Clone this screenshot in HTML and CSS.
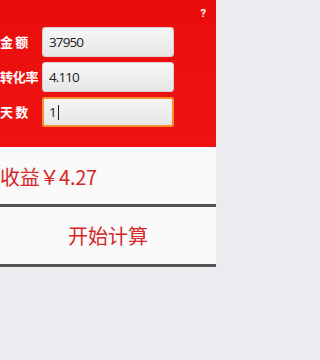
FILE: index.html
```html
<!DOCTYPE html>
<html lang="zh">
<head>
<meta charset="utf-8">
<link rel="stylesheet" href="styles.css">
</head>
<body>
<div class="app">
  <section class="top">
    <div class="help">?</div>
    <div class="form">
      <div class="row"><span class="label">金 额</span><div class="field">37950</div></div>
      <div class="row"><span class="label">转化率</span><div class="field">4.110</div></div>
      <div class="row"><span class="label">天 数</span><div class="field focus">1<span class="caret"></span></div></div>
    </div>
  </section>
  <section class="result">收益￥4.27</section>
  <div class="rule"></div>
  <section class="action">开始计算</section>
  <div class="rule"></div>
  <div class="rest"></div>
</div>
</body>
</html>
```
FILE: styles.css
```css
html, body {
  margin: 0;
  padding: 0;
  height: 360px;
  overflow: hidden;
  background: #ecebf0;
  font-family: "Noto Sans CJK SC", "Roboto", sans-serif;
}
.app {
  width: 216px;
  display: flex;
  flex-direction: column;
  height: 360px;
}
.top {
  background: linear-gradient(#ea0c0c, #ee1414);
  height: 147px;
  box-sizing: border-box;
  padding: 8px 0 0 0;
  display: flex;
  flex-direction: column;
}
.help {
  align-self: flex-end;
  margin-right: 10px;
  color: #fff;
  font-family: "Roboto", sans-serif;
  font-weight: bold;
  font-size: 11px;
  line-height: 11px;
  height: 11px;
}
.form {
  margin-top: 8px;
  display: flex;
  flex-direction: column;
  gap: 5px;
}
.row {
  display: flex;
  align-items: center;
  height: 30px;
}
.label {
  width: 42px;
  color: #fff;
  font-size: 13px;
  font-weight: bold;
  line-height: 30px;
  white-space: pre;
  letter-spacing: -0.3px;
}
.field {
  width: 132px;
  height: 30px;
  box-sizing: border-box;
  border-radius: 3px;
  background: linear-gradient(#f6f6f6, #e6e6e6);
  border: 1px solid #d8d0d0;
  padding-left: 6px;
  font-family: "Open Sans", sans-serif;
  font-size: 13.5px;
  letter-spacing: -0.9px;
  color: #222;
  line-height: 28px;
  display: flex;
  align-items: center;
}
.field.focus {
  border: 2px solid #f6922a;
  padding-left: 5px;
}
.caret {
  display: inline-block;
  width: 1px;
  height: 15px;
  background: #222;
  margin-left: 2px;
}
.result {
  background: #fafafa;
  height: 57px;
  display: flex;
  align-items: center;
  padding-left: 0;
  padding-top: 1px;
  box-sizing: border-box;
  color: #d52727;
  font-size: 20px;
  letter-spacing: -0.3px;
}
.rule {
  height: 3px;
  background: #555;
  box-shadow: 0 1px 1px rgba(0,0,0,0.2);
}
.action {
  background: #fafafa;
  height: 57px;
  display: flex;
  align-items: center;
  justify-content: center;
  color: #d52727;
  font-size: 20px;
}
.rest {
  flex: 1;
  background: #ecebf0;
}
```
